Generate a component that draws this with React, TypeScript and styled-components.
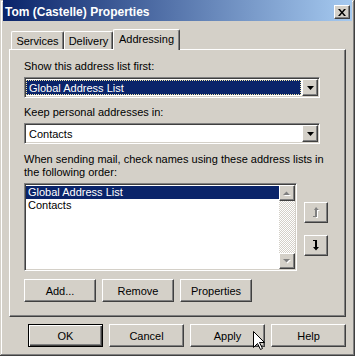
import React from "react";
import styled, { createGlobalStyle } from "styled-components";

const face = "#d4d0c8";
const navy = "#0a246a";

const GlobalStyle = createGlobalStyle`
  html, body {
    margin: 0;
    padding: 0;
    background: ${face};
  }
  body {
    font-family: "Liberation Sans", Arial, sans-serif;
    font-size: 11px;
    color: #000;
  }
  * {
    box-sizing: border-box;
  }
`;

const Window = styled.div`
  position: relative;
  width: 355px;
  height: 356px;
  padding: 0 3px 3px 3px;
  background: ${face};
  box-shadow: inset -1px -1px #404040, inset 1px 1px ${face},
    inset -2px -2px #808080, inset 2px 2px #fff;
  display: flex;
  flex-direction: column;
`;

const TitleBar = styled.div`
  height: 21px;
  padding: 3px 2px 0 2px;
  display: flex;
  align-items: center;
  justify-content: space-between;
  background: linear-gradient(to right, ${navy}, #a6caf0);
  color: #fff;
  font-weight: bold;
  font-size: 12px;
`;

const raised = `
  background: ${face};
  border: 1px solid;
  border-color: #fff #404040 #404040 #fff;
  box-shadow: inset -1px -1px #808080, inset 1px 1px ${face};
`;

const sunken = `
  border: 1px solid;
  border-color: #808080 #fff #fff #808080;
  box-shadow: inset 1px 1px #404040, inset -1px -1px ${face};
  padding: 1px;
  background: #fff;
`;

const CloseButton = styled.div`
  ${raised}
  width: 16px;
  height: 14px;
  display: flex;
  align-items: center;
  justify-content: center;
`;

const Body = styled.div`
  flex: 1;
  padding: 8px 6px 0 6px;
  display: flex;
  flex-direction: column;
`;

const TabRow = styled.div`
  display: flex;
  align-items: flex-end;
  padding-left: 2px;
`;

const Tab = styled.div<{ $active?: boolean; $w: number }>`
  position: relative;
  z-index: ${(p) => (p.$active ? 2 : 0)};
  width: ${(p) => p.$w}px;
  height: ${(p) => (p.$active ? 21 : 18)}px;
  margin-bottom: ${(p) => (p.$active ? -1 : 0)}px;
  padding-bottom: ${(p) => (p.$active ? 3 : 0)}px;
  background: ${face};
  border-top: 1px solid #fff;
  border-left: 1px solid #fff;
  border-right: 1px solid #404040;
  box-shadow: inset -1px 0 #808080;
  border-radius: 2px 2px 0 0;
  display: flex;
  align-items: center;
  justify-content: center;
`;

const Panel = styled.div`
  position: relative;
  z-index: 1;
  height: 268px;
  border: 1px solid;
  border-color: #fff #404040 #404040 #fff;
  box-shadow: inset -1px -1px #808080;
  padding: 10px 14px 0 14px;
  display: flex;
  flex-direction: column;
`;

const Label = styled.div`
  line-height: 13px;
  margin-bottom: 4px;
  white-space: nowrap;
`;

const Combo = styled.div`
  ${sunken}
  width: 296px;
  height: 21px;
  margin-bottom: 8px;
  display: flex;
`;

const ComboValue = styled.div<{ $selected?: boolean }>`
  flex: 1;
  margin: 1px 1px 1px 0;
  padding-left: 2px;
  display: flex;
  align-items: center;
  background: ${(p) => (p.$selected ? navy : "#fff")};
  color: ${(p) => (p.$selected ? "#fff" : "#000")};
  border: 1px ${(p) => (p.$selected ? "dotted #f4e9a8" : "solid transparent")};
`;

const DropButton = styled.div`
  ${raised}
  width: 16px;
  height: 17px;
  display: flex;
  align-items: center;
  justify-content: center;
`;

const ListRow = styled.div`
  display: flex;
  margin-top: 4px;
`;

const ListBox = styled.div`
  ${sunken}
  width: 273px;
  height: 88px;
  display: flex;
`;

const Items = styled.div`
  flex: 1;
  padding-top: 1px;
`;

const Item = styled.div<{ $selected?: boolean }>`
  height: 13px;
  line-height: 13px;
  padding-left: 2px;
  background: ${(p) => (p.$selected ? navy : "transparent")};
  color: ${(p) => (p.$selected ? "#fff" : "#000")};
`;

const ScrollBar = styled.div`
  width: 16px;
  display: flex;
  flex-direction: column;
`;

const ScrollArrow = styled.div`
  ${raised}
  width: 16px;
  height: 16px;
  display: flex;
  align-items: center;
  justify-content: center;
`;

const Track = styled.div`
  flex: 1;
  background: repeating-conic-gradient(${face} 0 25%, #fff 0 50%) 0 0 / 2px 2px;
`;

const SideButtons = styled.div`
  margin-left: 7px;
  padding-top: 19px;
  display: flex;
  flex-direction: column;
  gap: 12px;
`;

const IconButton = styled.div`
  ${raised}
  width: 24px;
  height: 21px;
  display: flex;
  align-items: center;
  justify-content: center;
`;

const ButtonRow = styled.div<{ $end?: boolean }>`
  display: flex;
  gap: 6px;
  justify-content: ${(p) => (p.$end ? "flex-end" : "flex-start")};
  margin-top: ${(p) => (p.$end ? 7 : 8)}px;
`;

const PushButton = styled.div<{ $w: number; $default?: boolean }>`
  ${raised}
  width: ${(p) => p.$w}px;
  height: 23px;
  display: flex;
  align-items: center;
  justify-content: center;
  ${(p) =>
    p.$default
      ? `border-color: #000;
         box-shadow: inset 1px 1px #fff, inset -1px -1px #404040, inset -2px -2px #808080;`
      : ""}
`;

const Cursor = styled.svg`
  position: absolute;
  left: 253px;
  top: 331px;
  z-index: 5;
`;

const DownTriangle = ({ color = "#000" }: { color?: string }) => (
  <svg width="7" height="4" viewBox="0 0 7 4">
    <path d="M0 0h7L3.5 4z" fill={color} />
  </svg>
);

const GrayArrow = ({ up }: { up?: boolean }) => (
  <svg width="8" height="5" viewBox="0 0 8 5">
    {up ? (
      <>
        <path d="M1 5h7L4.5 1.5z" fill="#fff" />
        <path d="M0 4h7L3.5 0.5z" fill="#808080" />
      </>
    ) : (
      <>
        <path d="M1 1h7L4.5 4.5z" fill="#fff" />
        <path d="M0 0h7L3.5 3.5z" fill="#808080" />
      </>
    )}
  </svg>
);

const MoveUpIcon = () => (
  <svg width="8" height="11" viewBox="0 0 8 11">
    <path d="M3 10h2V3h2L4 0 2 3h1z" fill="#fff" transform="translate(1 1)" />
    <path d="M3 10h2V3h2L4 0 2 3h1z" fill="#808080" />
    <path d="M1 10h3v-1H1z" fill="#808080" />
  </svg>
);

const MoveDownIcon = () => (
  <svg width="8" height="11" viewBox="0 0 8 11">
    <path d="M3 0h2v7h2l-3 3.5L1 7h2z" fill="#000" />
    <path d="M1 0h3v1H1z" fill="#000" />
  </svg>
);

export default function App() {
  return (
    <>
      <GlobalStyle />
      <Window>
        <TitleBar>
          <span>Tom (Castelle) Properties</span>
          <CloseButton>
            <svg width="8" height="7" viewBox="0 0 8 7">
              <path d="M0 0h2l2 2.5L6 0h2L5 3.5 8 7H6L4 4.5 2 7H0l3-3.5z" fill="#000" />
            </svg>
          </CloseButton>
        </TitleBar>
        <Body>
          <TabRow>
            <Tab $w={53}>Services</Tab>
            <Tab $w={49}>Delivery</Tab>
            <Tab $w={67} $active>
              Addressing
            </Tab>
          </TabRow>
          <Panel>
            <Label>Show this address list first:</Label>
            <Combo>
              <ComboValue $selected>Global Address List</ComboValue>
              <DropButton>
                <DownTriangle />
              </DropButton>
            </Combo>
            <Label>Keep personal addresses in:</Label>
            <Combo>
              <ComboValue>Contacts</ComboValue>
              <DropButton>
                <DownTriangle />
              </DropButton>
            </Combo>
            <Label style={{ marginTop: 1, marginBottom: 0 }}>
              When sending mail, check names using these address lists in
              <br />
              the following order:
            </Label>
            <ListRow>
              <ListBox>
                <Items>
                  <Item $selected>Global Address List</Item>
                  <Item>Contacts</Item>
                </Items>
                <ScrollBar>
                  <ScrollArrow>
                    <GrayArrow up />
                  </ScrollArrow>
                  <Track />
                  <ScrollArrow>
                    <GrayArrow />
                  </ScrollArrow>
                </ScrollBar>
              </ListBox>
              <SideButtons>
                <IconButton>
                  <MoveUpIcon />
                </IconButton>
                <IconButton>
                  <MoveDownIcon />
                </IconButton>
              </SideButtons>
            </ListRow>
            <ButtonRow>
              <PushButton $w={72}>Add...</PushButton>
              <PushButton $w={72}>Remove</PushButton>
              <PushButton $w={72}>Properties</PushButton>
            </ButtonRow>
          </Panel>
          <ButtonRow $end>
            <PushButton $w={75} $default>
              OK
            </PushButton>
            <PushButton $w={75}>Cancel</PushButton>
            <PushButton $w={75}>Apply</PushButton>
            <PushButton $w={75}>Help</PushButton>
          </ButtonRow>
        </Body>
        <Cursor width="13" height="20" viewBox="0 0 13 20">
          <path
            d="M0.5 0.5V16.5L4.5 12.5L7.5 18.5L9.5 17.5L6.5 11.5H11.5Z"
            fill="#fff"
            stroke="#000"
            strokeWidth="1"
          />
        </Cursor>
      </Window>
    </>
  );
}
